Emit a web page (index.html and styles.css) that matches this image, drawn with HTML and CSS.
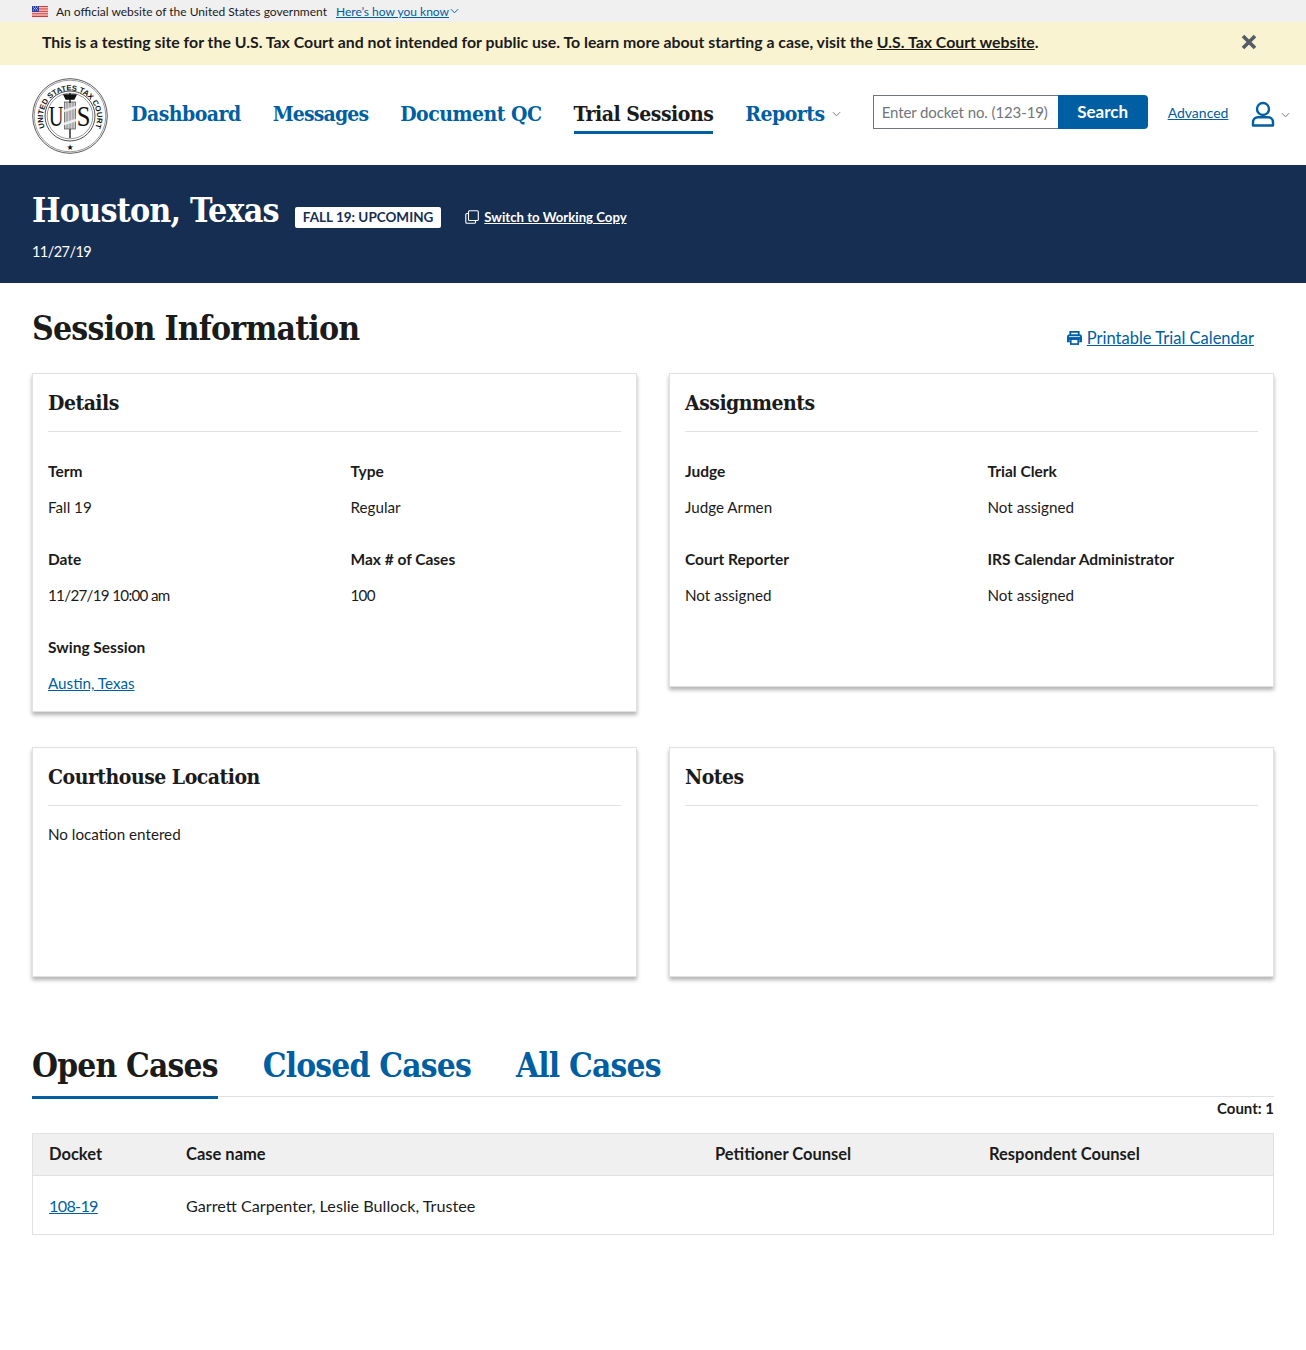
FILE: index.html
```html
<!DOCTYPE html>
<html lang="en">
<head>
<meta charset="utf-8">
<title>Houston, Texas</title>
<link rel="stylesheet" href="styles.css">
</head>
<body>
<div class="gov-banner">
  <svg class="flag" viewBox="0 0 16 11" width="16" height="11"><rect width="16" height="11" fill="#fff"/><path d="M0 .5h16M0 2.2h16M0 3.9h16M0 5.6h16M0 7.3h16M0 9h16M0 10.5h16" stroke="#d83933" stroke-width="1"/><rect width="7" height="6" fill="#2a3f9c"/><path d="M1 1h1M3 1h1M5 1h1M2 2.5h1M4 2.5h1M1 4h1M3 4h1M5 4h1" stroke="#fff" stroke-width=".7"/></svg>
  <span>An official website of the United States government</span>
  <a href="#" class="gov-link">Here’s how you know</a>
  <svg class="gov-chev" viewBox="0 0 10 6" width="9" height="6"><path d="M1 1l4 4 4-4" fill="none" stroke="#005ea2" stroke-width="1.1"/></svg>
</div>

<div class="alert">
  <p>This is a testing site for the U.S. Tax Court and not intended for public use. To learn more about starting a case, visit the <a href="#">U.S. Tax Court website</a>.</p>
  <svg class="alert-x" viewBox="0 0 16 16" width="16" height="16"><path d="M2 2l12 12M14 2L2 14" stroke="#565c65" stroke-width="3.6" fill="none"/></svg>
</div>

<header class="site-header">
  <svg class="seal" viewBox="0 0 76 76" width="76" height="76">
    <defs><path id="seal-arc" d="M13.800 51.500A27 27 0 1 1 62.200 51.500"/></defs>
    <circle cx="38" cy="38" r="37.300" fill="#fff" stroke="#333" stroke-width=".8"/>
    <circle cx="38" cy="38" r="35.800" fill="none" stroke="#555" stroke-width=".6"/>
    <circle cx="38" cy="38" r="25" fill="none" stroke="#222" stroke-width=".8"/>
    <circle cx="38" cy="38" r="22.800" fill="none" stroke="#333" stroke-width=".5"/>
    <text class="seal-ring"><textPath href="#seal-arc" startOffset="50%" text-anchor="middle">UNITED STATES TAX COURT</textPath></text>
    <rect x="32.500" y="24" width="11" height="27" fill="#ccc" stroke="#333" stroke-width=".6"/>
    <path d="M35 24v27M38 24v27M41 24v27" stroke="#777" stroke-width=".7"/>
    <path d="M32 17h12l-2 4h-8zM38 15v10M38 51v9" stroke="#111" stroke-width="1.300" fill="#111"/>
    <path d="M32 33l12-4M32 46l12-4" stroke="#eee" stroke-width="2.400"/>
    <text class="seal-letter seal-u" text-anchor="middle">U</text>
    <text class="seal-letter seal-s" text-anchor="middle">S</text>
    <text x="38" y="72" class="seal-star" text-anchor="middle">★</text>
  </svg>
  <nav class="main-nav">
    <a href="#">Dashboard</a>
    <a href="#" class="nav-tight">Messages</a>
    <a href="#">Document QC</a>
    <a href="#" class="active">Trial Sessions</a>
    <a href="#" class="with-chev">Reports<svg viewBox="0 0 10 6" width="9" height="6"><path d="M1 1l4 4 4-4" fill="none" stroke="#71767a" stroke-width="1.100"/></svg></a>
  </nav>
  <form class="search">
    <input type="text" placeholder="Enter docket no. (123-19)">
    <button type="button">Search</button>
  </form>
  <a href="#" class="advanced">Advanced</a>
  <svg class="user" viewBox="0 0 24 26" width="24" height="26"><circle cx="12" cy="8" r="6" fill="none" stroke="#005ea2" stroke-width="2.400"/><path d="M2 24.500v-3.200c0-3 2.200-5 5-5h10c2.800 0 5 2 5 5v3.200z" fill="none" stroke="#005ea2" stroke-width="2.400" stroke-linejoin="round"/></svg>
  <svg class="user-chev" viewBox="0 0 10 6" width="9" height="6"><path d="M1 1l4 4 4-4" fill="none" stroke="#71767a" stroke-width="1.100"/></svg>
</header>

<section class="hero">
  <div class="hero-top">
    <h1>Houston, Texas</h1>
    <span class="tag">FALL 19: UPCOMING</span>
    <svg class="copy" viewBox="0 0 14 14" width="14" height="14"><rect x="3.500" y=".7" width="9.800" height="9.800" rx="1" fill="none" stroke="#fff" stroke-width="1.100"/><path d="M3.500 3.500H1.800a1 1 0 0 0-1 1v7.700a1 1 0 0 0 1 1h7.700a1 1 0 0 0 1-1v-1.700" fill="none" stroke="#fff" stroke-width="1.100"/></svg>
    <a href="#" class="switch">Switch to Working Copy</a>
  </div>
  <p class="hero-date num">11/27/19</p>
</section>

<main class="content">
  <div class="section-head">
    <h2>Session Information</h2>
    <a href="#" class="print">
      <svg viewBox="0 0 16 15" width="15" height="14"><path d="M3.500 4V1h9v3M3 11H1V6a1.500 1.500 0 0 1 1.500-1.500h11A1.500 1.500 0 0 1 15 6v5h-2" fill="none" stroke="#005ea2" stroke-width="2"/><rect x="4" y="8.500" width="8" height="5.500" fill="none" stroke="#005ea2" stroke-width="1.800"/><path d="M1 8h14" stroke="#005ea2" stroke-width="3"/></svg>
      <span>Printable Trial Calendar</span>
    </a>
  </div>

  <div class="cards">
    <article class="card">
      <h3>Details</h3>
      <div class="fields fields-long">
        <div class="field"><h4>Term</h4><p>Fall 19</p></div>
        <div class="field"><h4>Type</h4><p>Regular</p></div>
        <div class="field"><h4>Date</h4><p class="num">11/27/19 10:00 am</p></div>
        <div class="field"><h4>Max # of Cases</h4><p class="num">100</p></div>
        <div class="field"><h4>Swing Session</h4><p><a href="#">Austin, Texas</a></p></div>
      </div>
    </article>
    <article class="card">
      <h3>Assignments</h3>
      <div class="fields fields-short">
        <div class="field"><h4>Judge</h4><p>Judge Armen</p></div>
        <div class="field"><h4>Trial Clerk</h4><p>Not assigned</p></div>
        <div class="field"><h4>Court Reporter</h4><p>Not assigned</p></div>
        <div class="field"><h4>IRS Calendar Administrator</h4><p>Not assigned</p></div>
      </div>
    </article>
    <article class="card card-low">
      <h3>Courthouse Location</h3>
      <p class="card-text">No location entered</p>
    </article>
    <article class="card card-low">
      <h3>Notes</h3>
    </article>
  </div>

  <div class="tabs">
    <a href="#" class="active">Open Cases</a>
    <a href="#">Closed Cases</a>
    <a href="#">All Cases</a>
  </div>
  <p class="count">Count: 1</p>

  <div class="table">
    <div class="row row-head">
      <div>Docket</div><div>Case name</div><div>Petitioner Counsel</div><div>Respondent Counsel</div>
    </div>
    <div class="row row-body">
      <div><a href="#" class="num">108-19</a></div><div>Garrett Carpenter, Leslie Bullock, Trustee</div><div></div><div></div>
    </div>
  </div>
</main>
</body>
</html>
```
FILE: styles.css
```css
* { box-sizing: border-box; }
html, body { margin: 0; padding: 0; }
body {
  font-family: "Lato", "Liberation Sans", sans-serif;
  font-size: 16px;
  color: #1b1b1b;
  background: #fff;
  min-height: 1350px;
}
a { color: #005ea2; }
h1, h2, h3, h4, p { margin: 0; }
.num { letter-spacing: -.7px; }

.gov-banner {
  height: 22px;
  background: #f0f0f0;
  padding: 0 32px;
  display: flex;
  align-items: center;
  font-size: 12px;
  color: #1b1b1b;
}
.flag { margin-right: 8px; }
.gov-link { margin-left: 9px; }
.gov-chev { margin-left: 1px; }

.alert {
  height: 43px;
  background: #faf3d1;
  padding: 0 49px 5px 42px;
  display: flex;
  align-items: center;
  justify-content: space-between;
  font-weight: 700;
  font-size: 15.850px;
}
.alert a { color: #1b1b1b; }
.alert-x { margin-top: 1px; }

.site-header {
  height: 100px;
  padding: 0 15px 0 32px;
  display: flex;
  align-items: center;
}
.seal { flex: none; margin-top: 1px; }
.seal-ring { font: 700 7.600px "Liberation Sans", sans-serif; fill: #111; }
.seal-letter { font: 400 30px "Liberation Serif", serif; fill: #111; }
.seal-u { transform: translate(24px, 48px) scale(.68, 1); }
.seal-s { transform: translate(51.500px, 48px) scale(.82, 1); }
.seal-star { font: 8px "DejaVu Sans", sans-serif; fill: #111; }

.main-nav {
  display: flex;
  gap: 32px;
  margin-left: 23px;
  font-family: "DejaVu Serif Condensed", "DejaVu Serif", serif;
}
.main-nav a {
  font-size: 21px;
  font-weight: 700;
  letter-spacing: -.5px;
  text-decoration: none;
  color: #005ea2;
  height: 36px;
  line-height: 32px;
  white-space: nowrap;
  margin-top: 1px;
}
.main-nav a.nav-tight { letter-spacing: -.85px; }
.main-nav a.active { color: #1b1b1b; border-bottom: 3px solid #005ea2; }
.with-chev svg { margin-left: 7px; vertical-align: 4px; }

.search { display: flex; margin-left: 32px; margin-top: -6px; }
.search input {
  width: 185px;
  height: 34px;
  border: 1px solid #71767a;
  border-right: 0;
  padding: 0 8px;
  font: 15px "Lato", sans-serif;
  letter-spacing: -.1px;
  border-radius: 0;
}
.search input::placeholder { color: #71767a; opacity: 1; }
.search button {
  width: 90px;
  height: 34px;
  border: 0;
  border-radius: 0 4px 4px 0;
  background: #005ea2;
  color: #fff;
  font: 700 17px "Lato", sans-serif;
  padding: 0 0 2px;
}
.advanced { margin-left: 20px; font-size: 14px; margin-top: -6px; }
.user { margin-left: 23px; margin-top: -3px; flex: none; }
.user-chev { margin-left: 6px; flex: none; }

.hero {
  height: 118px;
  background: #162e51;
  color: #fff;
  padding: 22px 32px 0;
}
.hero-top { display: flex; align-items: center; height: 46px; }
.hero h1 {
  font-family: "DejaVu Serif Condensed", "DejaVu Serif", serif;
  font-size: 33.700px;
  font-weight: 700;
  letter-spacing: -.8px;
  line-height: 46px;
}
.tag {
  margin-left: 16px;
  height: 21px;
  line-height: 21px;
  padding: 0 8px;
  background: #fff;
  color: #162e51;
  font-size: 13.500px;
  font-weight: 700;
  border-radius: 2px;
  white-space: nowrap;
  margin-top: 14px;
}
.copy { margin-left: 24px; margin-top: 14px; }
.switch { color: #fff; font-weight: 700; font-size: 13.200px; margin-left: 5px; margin-top: 14px; }
.hero-date { margin-top: 8px; font-size: 14.500px; line-height: 22px; letter-spacing: -.55px; }

.content { padding: 0 32px; }
.section-head {
  height: 90px;
  display: flex;
  justify-content: space-between;
  align-items: flex-start;
  padding-right: 20px;
}
.section-head h2 {
  font-family: "DejaVu Serif Condensed", "DejaVu Serif", serif;
  font-size: 33.500px;
  font-weight: 700;
  letter-spacing: -.8px;
  line-height: 46px;
  margin-top: 23px;
}
.print { display: flex; align-items: center; gap: 5px; margin-top: 45px; font-size: 16.500px; text-decoration: none; }
.print span { text-decoration: underline; }

.cards {
  display: grid;
  grid-template-columns: 1fr 1fr;
  column-gap: 32px;
  row-gap: 35px;
  align-items: start;
}
.card {
  background: #fff;
  border: 1px solid #dfe1e2;
  box-shadow: 0 3px 4px rgba(0, 0, 0, .3);
  padding: 0 15px;
}
.card h3 {
  font-family: "DejaVu Serif Condensed", "DejaVu Serif", serif;
  font-size: 21px;
  font-weight: 700;
  letter-spacing: -.5px;
  line-height: 28px;
  height: 58px;
  padding-top: 15px;
  border-bottom: 1px solid #dfe1e2;
}
.fields {
  display: grid;
  grid-template-columns: 1fr 1fr;
  column-gap: 32px;
  align-content: start;
  padding-top: 25px;
}
.fields-long { height: 279px; }
.fields-short { height: 254px; }
.field { height: 88px; }
.field h4 { font-size: 15.500px; font-weight: 700; line-height: 28px; }
.field p { font-size: 15.200px; line-height: 28px; margin-top: 8px; }
.card-low { height: 230px; }
.card-text { font-size: 15.200px; line-height: 22px; margin-top: 17px; }

.tabs {
  margin-top: 60px;
  display: flex;
  gap: 45px;
  height: 60px;
  border-bottom: 1px solid #dfe1e2;
}
.tabs a {
  font-family: "DejaVu Serif Condensed", "DejaVu Serif", serif;
  font-size: 33.200px;
  font-weight: 700;
  letter-spacing: -.8px;
  line-height: 58px;
  height: 62px;
  text-decoration: none;
}
.tabs a.active { color: #1b1b1b; border-bottom: 3px solid #005ea2; }
.count { text-align: right; font-weight: 700; font-size: 15px; line-height: 22px; }

.table { margin-top: 14px; border: 1px solid #dfe1e2; }
.row {
  display: grid;
  grid-template-columns: 137px 529px 274px 1fr;
  padding: 0 16px 0 0;
}
.row > div { padding-left: 16px; }
.row-head {
  height: 42px;
  line-height: 41px;
  background: #f0f0f0;
  border-bottom: 1px solid #dfe1e2;
  font-weight: 700;
  font-size: 16.500px;
}
.row-body { height: 58px; line-height: 60px; font-size: 16.200px; }
```
